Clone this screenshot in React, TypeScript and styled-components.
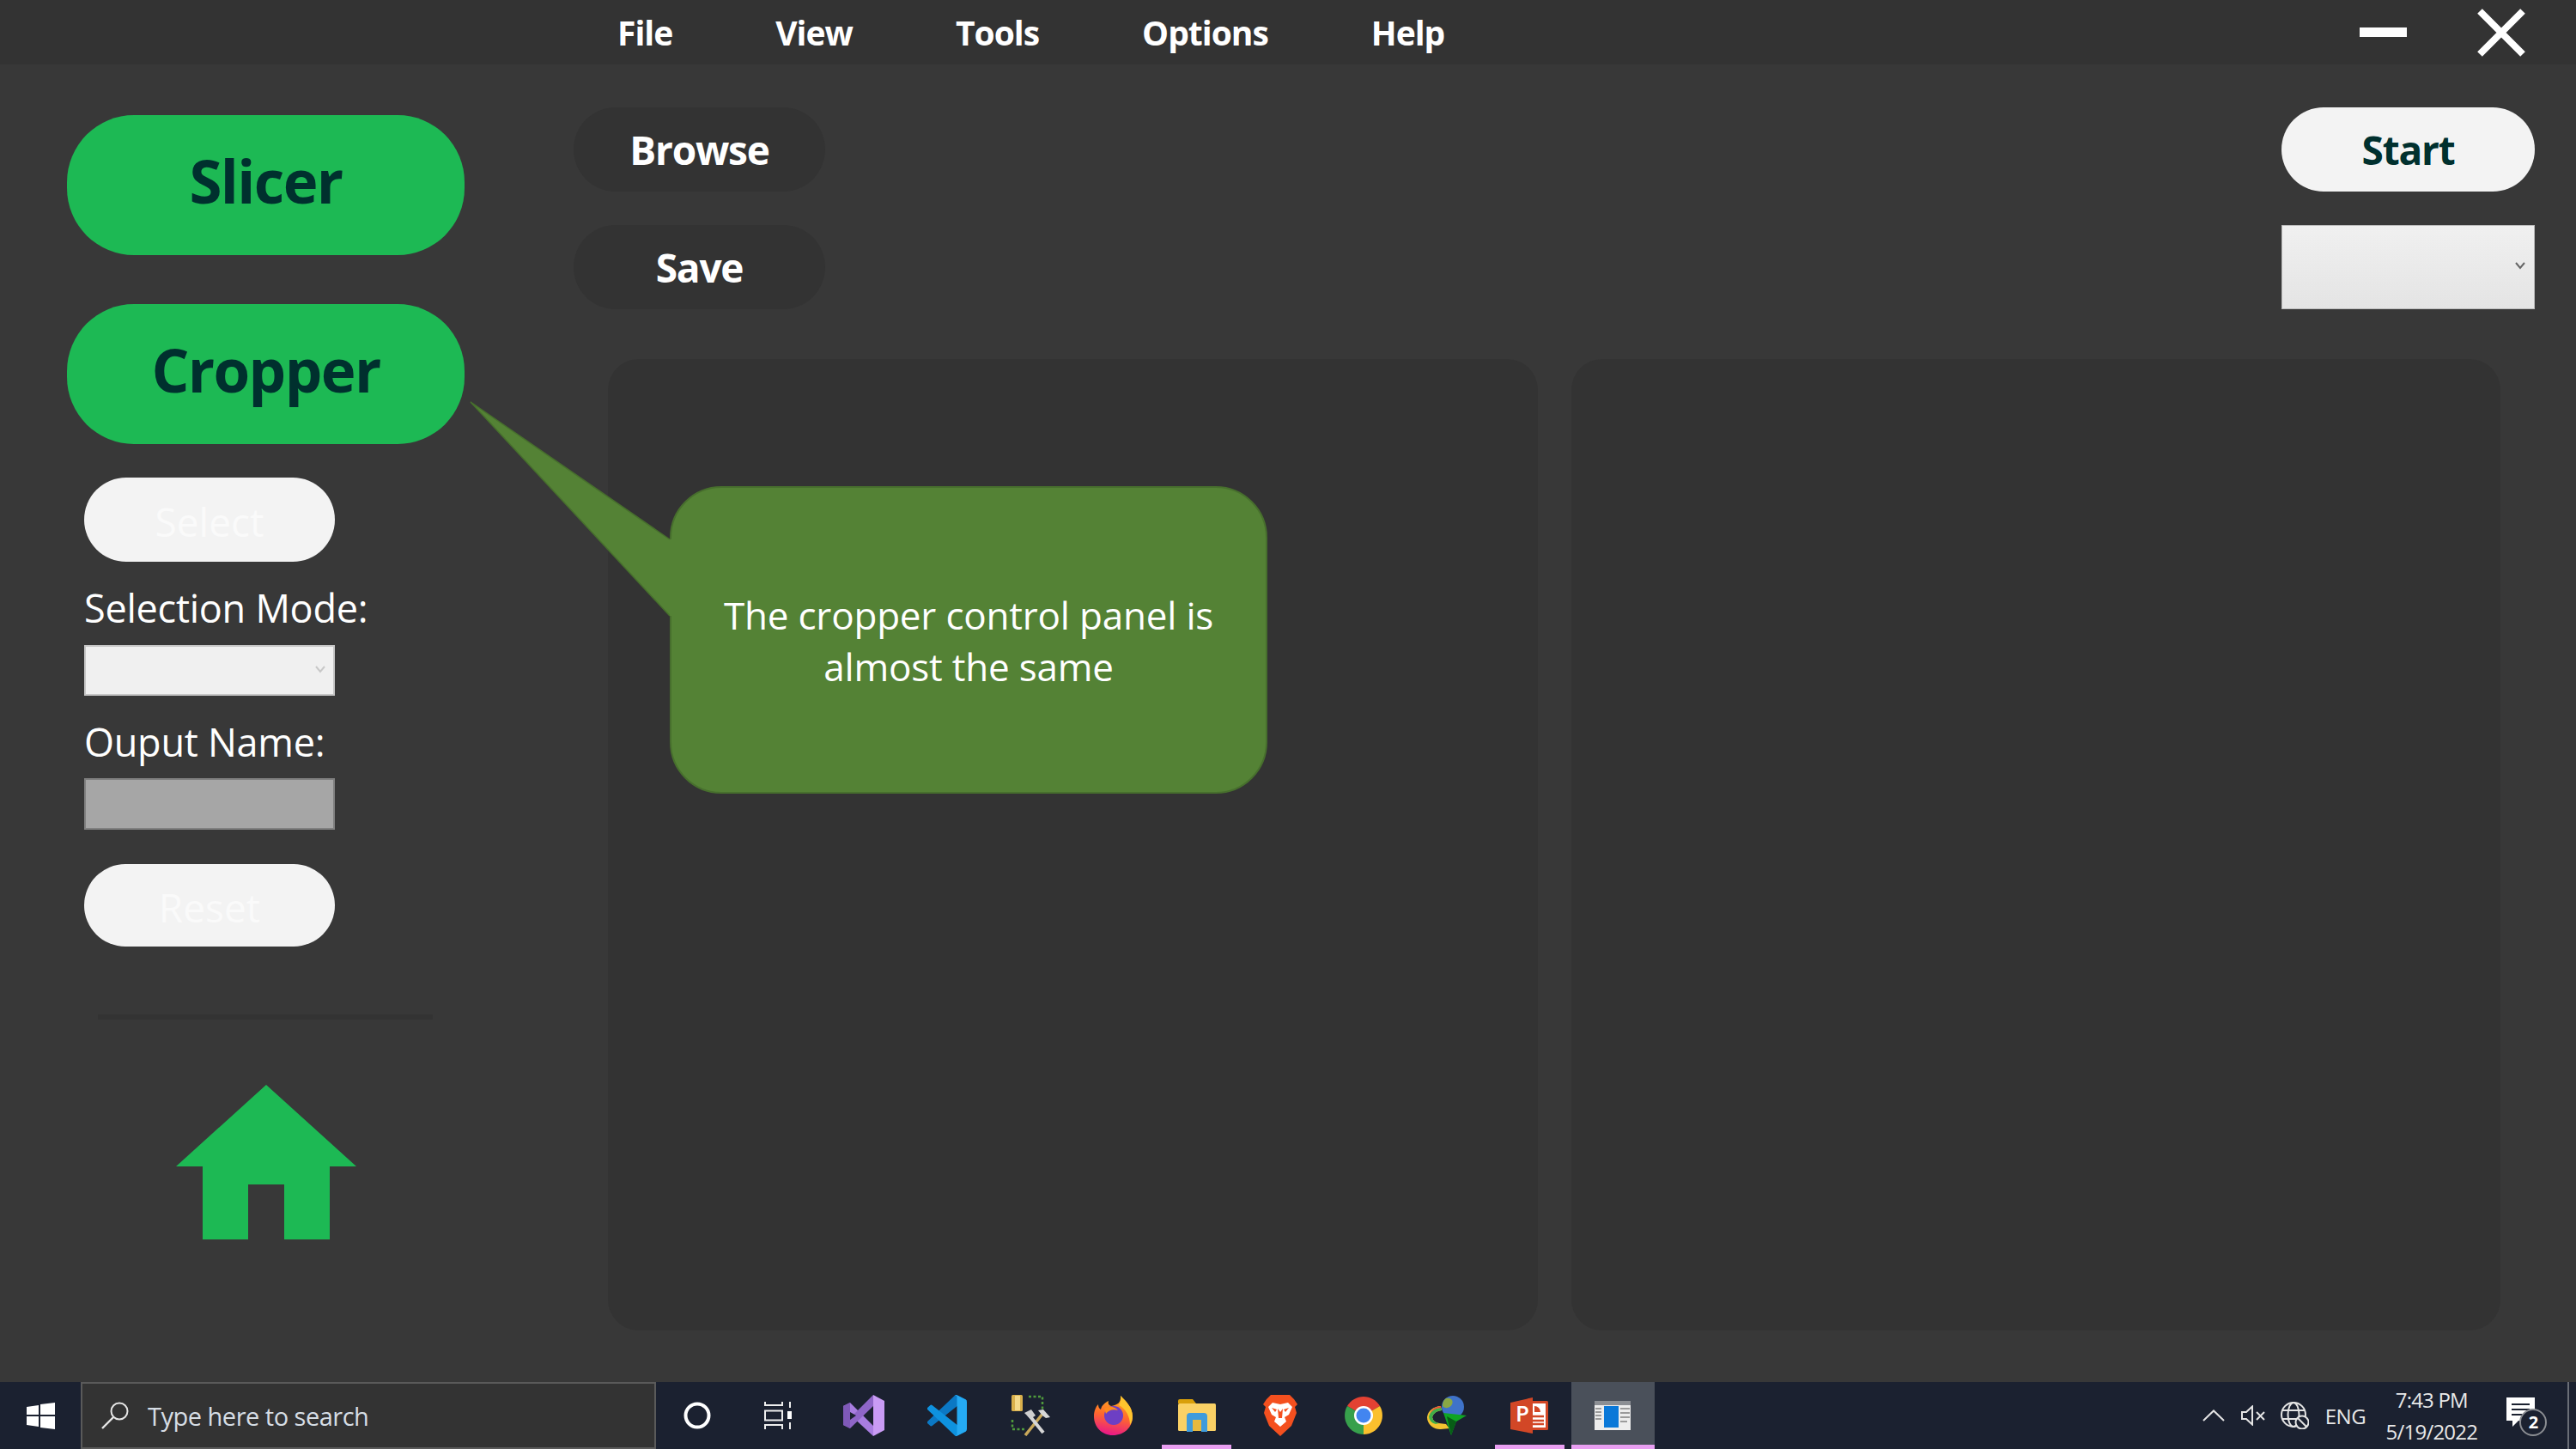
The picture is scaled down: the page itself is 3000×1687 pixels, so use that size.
import { createGlobalStyle, styled } from "styled-components";

const GlobalStyle = createGlobalStyle`
  html, body {
    margin: 0;
    padding: 0;
    background: #383838;
  }
  * {
    box-sizing: border-box;
  }
`;

const FONT = `"Open Sans", "Noto Sans", "Liberation Sans", sans-serif`;

const menuItems = ["File", "View", "Tools", "Options", "Help"];

export default function App() {
  return (
    <Window>
      <GlobalStyle />
      <TitleBar>
        <Menu>
          {menuItems.map((item) => (
            <MenuItem key={item}>{item}</MenuItem>
          ))}
        </Menu>
        <WindowButtons>
          <MinimizeBar />
          <svg width="60" height="60" viewBox="0 0 60 60">
            <path d="M5 5 L55 55 M55 5 L5 55" stroke="#fff" strokeWidth="8" />
          </svg>
        </WindowButtons>
      </TitleBar>

      <Body>
        <Sidebar>
          <NavButton>Slicer</NavButton>
          <NavButton>Cropper</NavButton>
          <Controls>
            <GhostPill>Select</GhostPill>
            <FieldLabel>Selection Mode:</FieldLabel>
            <SmallCombo>
              <svg width="12" height="9" viewBox="0 0 12 9">
                <path d="M1 1 L6 7 L11 1" fill="none" stroke="#c8c8c8" strokeWidth="2" />
              </svg>
            </SmallCombo>
            <FieldLabel>Ouput Name:</FieldLabel>
            <DisabledInput />
            <ResetPill>Reset</ResetPill>
          </Controls>
          <Divider />
          <HomeIcon viewBox="0 0 210 180" width="210" height="180">
            <path
              d="M105 0 L210 95 L179 95 L179 180 L126 180 L126 116 L84 116 L84 180 L31 180 L31 95 L0 95 Z"
              fill="#1DB954"
            />
          </HomeIcon>
        </Sidebar>

        <Main>
          <TopRow>
            <ActionColumn>
              <DarkPill>Browse</DarkPill>
              <DarkPill>Save</DarkPill>
            </ActionColumn>
            <ActionColumn>
              <StartPill>Start</StartPill>
              <LargeCombo>
                <svg width="12" height="9" viewBox="0 0 12 9">
                  <path d="M1 1 L6 7 L11 1" fill="none" stroke="#666" strokeWidth="2" />
                </svg>
              </LargeCombo>
            </ActionColumn>
          </TopRow>
          <Panels>
            <Panel />
            <Panel />
          </Panels>
        </Main>

        <Callout>
          <CalloutTail viewBox="0 0 240 260" width="240" height="260">
            <path d="M2 1 L234 161 L234 250 Z" fill="#548235" />
            <path d="M2 1 L234 161 M2 1 L234 250" stroke="#476f2d" strokeWidth="1.5" fill="none" />
            <path d="M234 161 L240 161 L240 250 L234 250 Z" fill="#548235" />
          </CalloutTail>
          The cropper control panel is
          <br />
          almost the same
        </Callout>
      </Body>

      <Taskbar>
        <StartSlot>
          <svg width="33" height="31" viewBox="0 0 33 31">
            <path d="M0 5 L14 3 L14 14 L0 14 Z M16 2 L33 0 L33 14 L16 14 Z M0 16 L14 16 L14 28 L0 26 Z M16 16 L33 16 L33 31 L16 29 Z" fill="#fff" />
          </svg>
        </StartSlot>
        <SearchBox>
          <svg width="34" height="32" viewBox="0 0 34 32">
            <circle cx="22" cy="11" r="9.5" fill="none" stroke="#e6e6e6" strokeWidth="2" />
            <path d="M15 18 L2 31" stroke="#e6e6e6" strokeWidth="2.4" />
          </svg>
          <SearchText>Type here to search</SearchText>
        </SearchBox>
        <TaskSlot>
          <svg width="32" height="32" viewBox="0 0 32 32">
            <circle cx="16" cy="16" r="13.5" fill="none" stroke="#fff" strokeWidth="4" />
          </svg>
        </TaskSlot>
        <TaskSlot>
          <TaskViewIcon width="32" height="32" viewBox="0 0 32 32">
            <path d="M1 0 V4 H21 V0 M1 10.5 H21 V21.5 H1 Z M1 32 V27 H21 V32 M30 0 V7 M30 24 V32" fill="none" stroke="#eee" strokeWidth="2" />
            <rect x="27" y="11" width="5" height="9" fill="#fff" />
          </TaskViewIcon>
        </TaskSlot>
        <TaskSlot>
          <svg width="48" height="48" viewBox="0 0 48 48">
            <path d="M35 0 L48 7 V41 L35 48 Z" fill="#c99bf4" />
            <path d="M0 13 L8 9 L35 36 V48 L8 23 Z" fill="#a87de0" />
            <path d="M35 0 V13 L8 39 L0 35 Z" fill="#8f66c8" />
            <path d="M0 13 L8 9 V39 L0 35 Z" fill="#7f59b8" />
            <path d="M8 20 L15 24 L8 29 Z" fill="#1b2130" />
          </svg>
        </TaskSlot>
        <TaskSlot>
          <svg width="46" height="48" viewBox="0 0 100 100" preserveAspectRatio="none">
            <path d="M96.46 10.8 75.86.87a6.23 6.23 0 0 0-7.11 1.21L1.32 63.56a4.17 4.17 0 0 0 0 6.16l5.51 5.01a4.17 4.17 0 0 0 5.32.24L93.37 13.37c2.72-2.07 6.63-.13 6.63 3.28v-.24a6.25 6.25 0 0 0-3.54-5.63Z" fill="#0b78c4" />
            <path d="m96.46 89.2-20.6 9.92a6.23 6.23 0 0 1-7.11-1.21L1.32 36.44a4.17 4.17 0 0 1 0-6.16l5.51-5.01a4.17 4.17 0 0 1 5.32-.24l81.22 61.6c2.72 2.07 6.63.13 6.63-3.28v.24a6.25 6.25 0 0 1-3.54 5.63Z" fill="#0e92df" />
            <path d="M75.86 99.13a6.23 6.23 0 0 1-7.11-1.21c2.31 2.31 6.25.67 6.25-2.59V4.67c0-3.26-3.94-4.9-6.25-2.59a6.23 6.23 0 0 1 7.11-1.21l20.6 9.91A6.25 6.25 0 0 1 100 16.41v67.18a6.25 6.25 0 0 1-3.54 5.63l-20.6 9.91Z" fill="#25aaf3" />
          </svg>
        </TaskSlot>
        <TaskSlot>
          <svg width="46" height="48" viewBox="0 0 46 48">
            <rect x="1" y="0" width="13" height="19" rx="1.5" fill="#d9b04c" />
            <rect x="5" y="1" width="6" height="17" fill="#f4d98a" />
            <path d="M21 2 H37 V18 M2 29 V40 H16" fill="none" stroke="#4f9a3c" strokeWidth="2.5" strokeDasharray="3 2.5" />
            <path d="M38 21 L17 47" stroke="#c9a85a" strokeWidth="3.5" />
            <path d="M21 23 L38 44" stroke="#d6d6d6" strokeWidth="4" />
            <path d="M16 21 L24 17 L29 24 L23 28 Z" fill="#cfcfcf" />
            <path d="M32 18 L38 17 L46 26 L41 27 L37 24 Z" fill="#d8d8d8" />
          </svg>
        </TaskSlot>
        <TaskSlot>
          <svg width="45" height="46" viewBox="0 0 45 46">
            <defs>
              <linearGradient id="foxBody" x1="0.6" y1="0" x2="0.4" y2="1">
                <stop offset="0" stopColor="#ffb21f" />
                <stop offset="0.5" stopColor="#ff6a2b" />
                <stop offset="1" stopColor="#e8168a" />
              </linearGradient>
            </defs>
            <path d="M31 0 C38 7 45 14 45 24 C45 37 35 46 22 46 C9 46 0 36 0 24 C0 18 2 13 5 10 C5 13 6 15 8 16 C9 11 13 8 17 6 C16 9 17 11 20 12 C27 11 32 8 31 0 Z" fill="url(#foxBody)" />
            <path d="M31 0 C38 7 45 14 45 24 C45 28 44 31 42 34 C42 24 37 15 29 11 C31 8 32 4 31 0 Z" fill="#ffc52e" />
            <circle cx="23" cy="23" r="11" fill="#6d3fc4" />
            <path d="M12 15 C18 11 25 13 28 17 C22 15 17 17 14 21 Z" fill="#ff8a1e" />
          </svg>
        </TaskSlot>
        <TaskSlot $open>
          <svg width="44" height="38" viewBox="0 0 44 38">
            <path d="M0 2 Q0 0 2 0 H17 L21 5 H0 Z" fill="#d99f0a" />
            <rect x="0" y="5" width="44" height="32" rx="1.5" fill="#fad165" />
            <path d="M10 38 V20 Q10 16 14 16 H30 Q34 16 34 20 V38 H27 V24 H17 V38 Z" fill="#3f9bdc" />
            <rect x="17" y="24" width="10" height="13" fill="#e7b93f" />
          </svg>
        </TaskSlot>
        <TaskSlot>
          <svg width="40" height="48" viewBox="0 0 40 48">
            <path d="M9 0 H31 L36 5 L40 11 L37 14 L39 21 L33 36 L20 48 L7 36 L1 21 L3 14 L0 11 L4 5 Z" fill="#f4501f" />
            <path d="M11 9 L20 11 L29 9 L34 14 L30 23 L25 26 L27 31 L20 37 L13 31 L15 26 L10 23 L6 14 Z" fill="#fff" />
            <path d="M17 16 L18 27 L22 27 L23 16 L20 20 Z" fill="#f4501f" />
            <path d="M10 15 L16 17 L14 20 Z M30 15 L24 17 L26 20 Z" fill="#f4501f" />
          </svg>
        </TaskSlot>
        <TaskSlot>
          <svg width="44" height="44" viewBox="0 0 44 44">
            <path d="M22 22 L3 11 A22 22 0 0 1 41 11 Z" fill="#e34133" />
            <path d="M22 22 L41 11 A22 22 0 0 1 22 44 Z" fill="#fbc02d" />
            <path d="M22 22 L22 44 A22 22 0 0 1 3 11 Z" fill="#37a04c" />
            <circle cx="22" cy="22" r="11" fill="#fff" />
            <circle cx="22" cy="22" r="8.5" fill="#4285f0" />
          </svg>
        </TaskSlot>
        <TaskSlot>
          <svg width="48" height="46" viewBox="0 0 48 46">
            <path d="M18 12 A17 14 0 0 0 2 25 A15 14 0 0 0 18 39 L28 38 L24 33 L16 32 A9 9 0 0 1 8 25 A12 11 0 0 1 19 17 Z" fill="#f2c230" />
            <path d="M19 17 A12 11 0 0 0 8 25 A9 9 0 0 0 16 32 L12 33 A11 10 0 0 1 4 24 A14 13 0 0 1 18 14 Z" fill="#3fae49" />
            <path d="M6 19 A15 13 0 0 1 18 12 L18 14 A14 13 0 0 0 4 24 Z" fill="#e8483c" />
            <circle cx="32" cy="13" r="13" fill="#3f73c9" />
            <path d="M24 3 C30 2 33 6 31 10 C29 14 24 16 20 12 C20 8 21 5 24 3 Z" fill="#8aa844" />
            <path d="M21 20 L48 23 L36 30 L30 46 Z" fill="#0fa524" />
            <path d="M25 24 L36 30 L30 46 Z" fill="#075d16" />
          </svg>
        </TaskSlot>
        <TaskSlot $open>
          <svg width="44" height="42" viewBox="0 0 44 42">
            <rect x="16" y="4" width="28" height="34" rx="1.5" fill="#d24726" />
            <rect x="19" y="7" width="22" height="28" fill="#fff" />
            <path d="M28 17 V10 A7 7 0 0 1 35 17 Z" fill="#d24726" />
            <path d="M24 22 H39 M24 27 H39 M24 31 H39" stroke="#d24726" strokeWidth="2.5" />
            <path d="M0 6 L26 0 V42 L0 37 Z" fill="#d24726" />
            <PptLetter x="6" y="28">P</PptLetter>
          </svg>
        </TaskSlot>
        <TaskSlot $active>
          <svg width="42" height="34" viewBox="0 0 42 34">
            <rect width="42" height="34" fill="#ededed" />
            <rect width="42" height="5" fill="#8c8f94" />
            <rect x="11" y="6" width="17" height="25" fill="#0a78d8" />
            <path d="M1 9 H8 M1 13 H8 M1 17 H8 M1 21 H8 M30 9 H41 M30 14 H41 M30 19 H41 M30 24 H38" stroke="#9b9b9b" strokeWidth="2" />
          </svg>
        </TaskSlot>

        <Tray>
          <svg width="26" height="14" viewBox="0 0 26 14">
            <path d="M1 13 L13 1.5 L25 13" fill="none" stroke="#e4e4e4" strokeWidth="2" />
          </svg>
          <SpeakerIcon width="28" height="24" viewBox="0 0 28 24">
            <path d="M1 8 H6 L13 1.5 V22.5 L6 16 H1 Z" fill="none" stroke="#e4e4e4" strokeWidth="2" />
            <path d="M18 8 L27 17 M27 8 L18 17" stroke="#e4e4e4" strokeWidth="2" />
          </SpeakerIcon>
          <GlobeIcon width="33" height="32" viewBox="0 0 33 32">
            <circle cx="15" cy="15" r="14" fill="none" stroke="#e4e4e4" strokeWidth="2" />
            <ellipse cx="15" cy="15" rx="6.5" ry="14" fill="none" stroke="#e4e4e4" strokeWidth="2" />
            <path d="M2 10 H28 M2 20 H28" stroke="#e4e4e4" strokeWidth="2" />
            <circle cx="25" cy="24" r="7.5" fill="#1b2130" stroke="#e4e4e4" strokeWidth="2" />
            <path d="M20 19 L30 29" stroke="#e4e4e4" strokeWidth="2" />
          </GlobeIcon>
          <TrayText>ENG</TrayText>
          <Clock>
            <span>7:43 PM</span>
            <span>5/19/2022</span>
          </Clock>
          <Notification>
            <svg width="33" height="34" viewBox="0 0 33 34">
              <path d="M0 0 H33 V27 H14 L7 34 V27 H0 Z" fill="#fff" />
              <path d="M6 8 H27 M6 14 H27 M6 20 H20" stroke="#1b2130" strokeWidth="2" />
            </svg>
            <Badge>2</Badge>
          </Notification>
        </Tray>
      </Taskbar>
    </Window>
  );
}

const Window = styled.div`
  position: relative;
  display: flex;
  flex-direction: column;
  width: 3000px;
  height: 1687px;
  overflow: hidden;
  background: #383838;
  font-family: ${FONT};
`;

const TitleBar = styled.header`
  display: flex;
  align-items: center;
  justify-content: space-between;
  height: 75px;
  padding: 0 57px 0 719px;
  background: #333333;
`;

const Menu = styled.nav`
  display: flex;
  gap: 120px;
`;

const MenuItem = styled.span`
  color: #fff;
  font-size: 39px;
  font-weight: 700;
  letter-spacing: -1px;
  line-height: 75px;
`;

const WindowButtons = styled.div`
  display: flex;
  align-items: center;
  gap: 80px;
`;

const MinimizeBar = styled.div`
  width: 55px;
  height: 11px;
  background: #fff;
`;

const Body = styled.div`
  position: relative;
  display: flex;
  flex: 1;
  min-height: 0;
`;

const Sidebar = styled.aside`
  display: flex;
  flex-direction: column;
  flex: 0 0 668px;
  padding: 59px 0 0 78px;
`;

const NavButton = styled.div`
  display: flex;
  align-items: center;
  justify-content: center;
  width: 463px;
  height: 163px;
  padding-bottom: 11px;
  border-radius: 78px;
  background: #1db954;
  color: #00302e;
  font-size: 69px;
  font-weight: 700;
  letter-spacing: -1.6px;

  & + & {
    margin-top: 57px;
  }
`;

const Controls = styled.div`
  display: flex;
  flex-direction: column;
  margin: 39px 0 0 20px;
`;

const GhostPill = styled.div`
  display: flex;
  align-items: center;
  justify-content: center;
  width: 292px;
  height: 98px;
  padding-top: 3px;
  border-radius: 49px;
  background: #f3f3f3;
  color: #fafafa;
  font-size: 46px;
`;

const ResetPill = styled(GhostPill)`
  height: 96px;
  margin-top: 40px;
`;

const FieldLabel = styled.div`
  height: 60px;
  margin-top: 24px;
  color: #fff;
  font-size: 45px;
  line-height: 60px;
  letter-spacing: -0.25px;
  white-space: nowrap;
`;

const SmallCombo = styled.div`
  display: flex;
  align-items: center;
  justify-content: flex-end;
  width: 292px;
  height: 59px;
  margin-top: 13px;
  padding: 0 9px 3px 0;
  border: 2px solid #c6c6c6;
  background: #f0f0f0;
`;

const DisabledInput = styled.div`
  width: 292px;
  height: 60px;
  margin-top: 12px;
  border: 2px solid #808080;
  background: #a6a6a6;
`;

const Divider = styled.div`
  width: 390px;
  height: 6px;
  margin: 79px 0 0 36px;
  background: #333333;
`;

const HomeIcon = styled.svg`
  margin: 76px 0 0 127px;
`;

const Main = styled.main`
  display: flex;
  flex-direction: column;
  flex: 1;
  min-width: 0;
`;

const TopRow = styled.div`
  display: flex;
  justify-content: space-between;
  padding: 50px 48px 0 0;
`;

const ActionColumn = styled.div`
  display: flex;
  flex-direction: column;
  gap: 39px;
`;

const DarkPill = styled.div`
  display: flex;
  align-items: center;
  justify-content: center;
  width: 293px;
  height: 98px;
  border-radius: 49px;
  background: #333333;
  color: #fff;
  font-size: 46px;
  font-weight: 700;
  letter-spacing: -1.2px;
`;

const StartPill = styled(DarkPill)`
  width: 295px;
  background: #f3f3f3;
  color: #00302e;
`;

const LargeCombo = styled.div`
  display: flex;
  align-items: center;
  justify-content: flex-end;
  width: 295px;
  height: 98px;
  padding: 0 10px 4px 0;
  border: 1px solid #bcbcbc;
  background: linear-gradient(#f0f0f0, #e4e4e4);
`;

const Panels = styled.div`
  display: flex;
  flex: 1;
  gap: 39px;
  margin-top: 58px;
  padding: 0 88px 60px 40px;
`;

const Panel = styled.section`
  flex: 1;
  border-radius: 36px;
  background: #333333;
`;

const Callout = styled.div`
  position: absolute;
  top: 491px;
  left: 780px;
  width: 696px;
  height: 358px;
  padding-top: 118px;
  border: 2px solid #476f2d;
  border-radius: 60px;
  background: #548235;
  color: #fff;
  font-size: 44px;
  line-height: 60px;
  letter-spacing: -0.2px;
  text-align: center;
`;

const CalloutTail = styled.svg`
  position: absolute;
  top: -101px;
  left: -236px;
`;

const PptLetter = styled.text`
  fill: #fff;
  font-family: ${FONT};
  font-size: 26px;
  font-weight: 600;
`;

const Taskbar = styled.footer`
  display: flex;
  align-items: stretch;
  height: 78px;
  background: #1b2130;
`;

const StartSlot = styled.div`
  display: flex;
  align-items: center;
  justify-content: center;
  flex: 0 0 94px;
`;

const SearchBox = styled.div`
  display: flex;
  align-items: center;
  gap: 21px;
  flex: 0 0 670px;
  padding-left: 21px;
  border: 2px solid #5a5a5a;
  background: #333333;
`;

const SearchText = styled.span`
  color: #d6dde4;
  font-size: 29px;
  letter-spacing: -0.5px;
`;

const TaskSlot = styled.div<{ $open?: boolean; $active?: boolean }>`
  position: relative;
  display: flex;
  align-items: center;
  justify-content: center;
  flex: 0 0 96.9px;
  background: ${(p) => (p.$active ? "#4a505a" : "transparent")};

  &::after {
    content: "";
    display: ${(p) => (p.$open || p.$active ? "block" : "none")};
    position: absolute;
    bottom: 0;
    left: ${(p) => (p.$active ? "0" : "8px")};
    right: ${(p) => (p.$active ? "0" : "8px")};
    height: 5px;
    background: #e99ff2;
  }
`;

const TaskViewIcon = styled.svg`
  margin-right: 6px;
`;

const Tray = styled.div`
  position: relative;
  display: flex;
  align-items: center;
  flex: 1;
  padding-left: 638px;
  color: #e8e8e8;

  &::after {
    content: "";
    position: absolute;
    top: 0;
    bottom: 0;
    right: 8px;
    width: 2px;
    background: #6a6e76;
  }
`;

const SpeakerIcon = styled.svg`
  margin-left: 19px;
`;

const GlobeIcon = styled.svg`
  margin-left: 18px;
`;

const TrayText = styled.span`
  margin-left: 19px;
  font-size: 24px;
  letter-spacing: -0.4px;
`;

const Clock = styled.div`
  display: flex;
  flex-direction: column;
  align-items: center;
  gap: 4px;
  width: 115px;
  margin-left: 19px;
  font-size: 24px;
  line-height: 33px;
  letter-spacing: -0.8px;
`;

const Notification = styled.div`
  position: relative;
  margin: 0 0 4px 30px;
`;

const Badge = styled.span`
  position: absolute;
  top: 13px;
  left: 15px;
  display: flex;
  align-items: center;
  justify-content: center;
  width: 32px;
  height: 32px;
  border: 2px solid #8a8d92;
  border-radius: 50%;
  background: #1b2130;
  color: #fff;
  font-size: 20px;
  font-weight: 700;
`;
